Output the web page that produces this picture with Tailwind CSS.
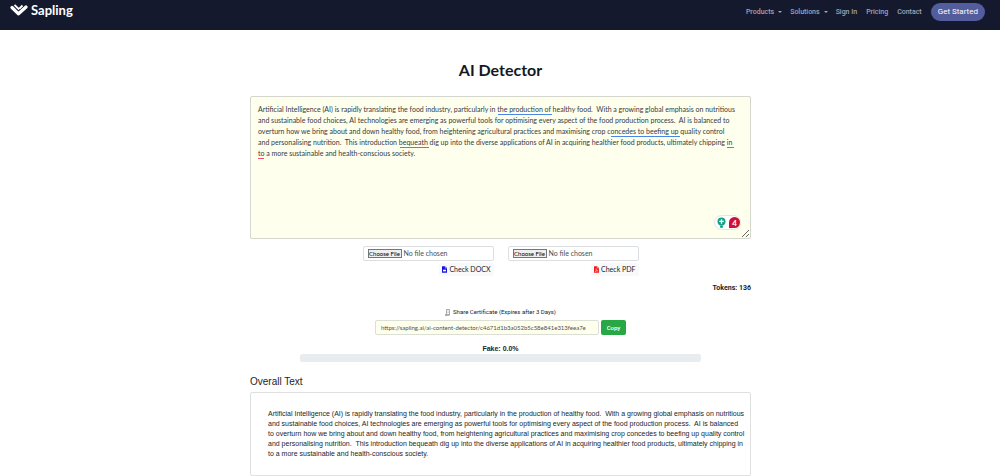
<!DOCTYPE html>
<html lang="en">
<head>
<meta charset="utf-8">
<meta name="viewport" content="width=device-width, initial-scale=1">
<title>AI Detector | Sapling</title>
<script src="https://cdn.jsdelivr.net/npm/@tailwindcss/browser@4"></script>
</head>
<body class="bg-white font-['Liberation_Sans',sans-serif] text-[#212529]">
<header class="flex h-[30px] items-start justify-between bg-[#15192e] pr-[15px] pl-[10px]">
  <a href="#" class="flex items-center gap-[3px] pt-[2px] font-['Lato',sans-serif] text-[13px] leading-4 font-bold text-white">
    <svg class="h-[12px] w-[18px]" viewBox="0 0 18 12" fill="none" aria-hidden="true"><path d="M2 3.500l6.500 6.300L16 3" stroke="#fff" stroke-width="3.200" stroke-linejoin="round" stroke-linecap="round"/><path d="M4.500 .8l4.700 4.700M12.500 1.500L9.500 4.500" stroke="#fff" stroke-width="1.800"/></svg>
    Sapling
  </a>
  <nav class="flex items-center pt-[3px] font-['Roboto',sans-serif] text-[7px] leading-[18px] font-medium text-[#a3a5b2]">
    <button type="button" class="mr-[8px] flex items-center gap-[4px]">Products <span class="border-x-2 border-t-2 border-x-transparent border-t-current"></span></button>
    <button type="button" class="mr-[8px] flex items-center gap-[4px]">Solutions <span class="border-x-2 border-t-2 border-x-transparent border-t-current"></span></button>
    <a href="#" class="mr-[9px]">Sign In</a>
    <a href="#" class="mr-[9px]">Pricing</a>
    <a href="#" class="mr-[9px]">Contact</a>
    <a href="#" class="rounded-full bg-[#535c9c] px-[7px] text-[8px] font-normal text-white">Get Started</a>
  </nav>
</header>
<main class="mx-auto w-[502px] max-w-full pl-px">
  <h1 class="pt-[28px] text-center font-['Lato',sans-serif] text-[16px] leading-6 font-bold text-[#15191e]">AI Detector</h1>
  <div class="relative mt-[14px] font-['Lato',sans-serif]">
    <textarea aria-label="Text to check" spellcheck="false" class="block h-[143px] w-full resize overflow-hidden rounded-[2px] border border-[#d5d7cf] bg-[#ffffee] px-[7px] py-[7px] text-[7px] leading-[11px] whitespace-pre text-[#343a40]">Artificial Intelligence (AI) is rapidly translating the food industry, particularly in the production of healthy food.  With a growing global emphasis on nutritious
and sustainable food choices, AI technologies are emerging as powerful tools for optimising every aspect of the food production process.  AI is balanced to
overturn how we bring about and down healthy food, from heightening agricultural practices and maximising crop concedes to beefing up quality control
and personalising nutrition.  This introduction bequeath dig up into the diverse applications of AI in acquiring healthier food products, ultimately chipping in
to a more sustainable and health-conscious society.</textarea>
    <div class="pointer-events-none" aria-hidden="true">
      <span class="absolute top-[18px] left-[248px] h-px w-[54px] bg-[#4a86e8]"></span>
      <span class="absolute top-[40px] left-[361px] h-px w-[69px] bg-[#4a86e8]"></span>
      <span class="absolute top-[51px] left-[150px] h-px w-[29px] bg-[#ef4b70]"></span>
      <span class="absolute top-[51px] left-[477px] h-px w-[7px] bg-[#ef4b70]"></span>
      <span class="absolute top-[62px] left-[8px] h-px w-[6px] bg-[#ef4b70]"></span>
    </div>
    <div class="absolute right-[10px] bottom-[9px] flex h-[15px] items-center gap-[3px] rounded-full border border-[#e3e5e8] bg-white pl-[2px]">
      <svg class="h-[11px] w-[9px]" viewBox="0 0 9 11" aria-hidden="true"><circle cx="4.5" cy="4.5" r="4" fill="#12a385"/><path d="M2.7 8.5h3.6L5.5 11h-2z" fill="#12a385"/><path d="M4.5 2.2v4.5M2.3 4.4h4.4" stroke="#fff" stroke-width="1.3"/></svg>
      <span class="flex h-[11px] w-[11px] items-center justify-center rounded-full rounded-bl-none bg-[#cf0f35] text-[8px] leading-none font-bold text-white">4</span>
    </div>
  </div>
  <div class="mt-[7px] flex justify-center gap-[14px] font-['Lato',sans-serif] text-[7px]">
    <div class="flex w-[131px] flex-col items-end gap-[2px]">
      <input type="file" aria-label="DOCX file" class="h-[15px] w-full rounded-[2px] border border-[#dcdfe2] px-[4px] py-[2px] text-[7px] leading-[9px] text-[#495057] file:mr-[2px] file:h-[9px] file:w-[34px] file:border file:border-solid file:border-[#767676] file:bg-[#efefef] file:p-0 file:text-[6px] file:leading-[7px] file:text-black">
      <button type="button" class="flex h-[13px] items-center gap-[2px] rounded-[2px] bg-[#f8f9fa] px-[3px]">
        <svg class="h-[7px] w-[5px]" viewBox="0 0 12 16" aria-hidden="true"><path d="M1 0h6v5h5v10q0 1-1 1H1q-1 0-1-1V1q0-1 1-1z M8 0l4 4H8z" fill="#1512e0"/><path d="M2.500 8.500h7v4h-7z" fill="#fff"/></svg>
        Check DOCX
      </button>
    </div>
    <div class="flex w-[131px] flex-col items-end gap-[2px]">
      <input type="file" aria-label="PDF file" class="h-[15px] w-full rounded-[2px] border border-[#dcdfe2] px-[4px] py-[2px] text-[7px] leading-[9px] text-[#495057] file:mr-[2px] file:h-[9px] file:w-[34px] file:border file:border-solid file:border-[#767676] file:bg-[#efefef] file:p-0 file:text-[6px] file:leading-[7px] file:text-black">
      <button type="button" class="flex h-[13px] items-center gap-[2px] rounded-[2px] bg-[#f8f9fa] px-[3px]">
        <svg class="h-[7px] w-[5px]" viewBox="0 0 12 16" aria-hidden="true"><path d="M1 0h6v5h5v10q0 1-1 1H1q-1 0-1-1V1q0-1 1-1z M8 0l4 4H8z" fill="#f01818"/><path d="M2.500 13.500C6 10 6 7 5 6c-1 3 2 5 5 5.500-3-.5-5 0-7.500 2z" fill="none" stroke="#fff"/></svg>
        Check PDF
      </button>
    </div>
  </div>
  <p class="mt-[7px] text-right font-['Roboto',sans-serif] text-[7px] leading-[10px] font-bold">Tokens: 136</p>
  <label for="share" class="mt-[14px] flex items-center justify-center gap-[3px] font-['Roboto',sans-serif] text-[6px] leading-[10px]">
    <svg class="h-[7px] w-[5px]" viewBox="0 0 5 7" fill="none" stroke="#777" stroke-width=".6" aria-hidden="true"><path d="M1.500 .5h3v5M1.500 .5v5M2.500 2h1M2.500 3.500h1M.3 5.500v1h3.500q.7 0 .7-1H.3"/></svg>
    Share Certificate (Expires after 3 Days)
  </label>
  <div class="mt-[3px] flex justify-center gap-[2px]">
    <input id="share" type="text" readonly value="https://sapling.ai/ai-content-detector/c4671d1b3a052b5c58e841e313feea7e" class="h-[15px] w-[224px] rounded-[2px] border border-[#dcdfd6] bg-[#ffffee] px-[5px] font-['Lato',sans-serif] text-[6px] text-[#495057]">
    <button type="button" class="h-[15px] w-[25px] rounded-[2px] bg-[#28a745] font-['Roboto',sans-serif] text-[6px] leading-[15px] font-medium text-white">Copy</button>
  </div>
  <p class="mt-[9px] text-center text-[7px] leading-[10px] font-bold">Fake: 0.0%</p>
  <div role="progressbar" aria-label="Fake" aria-valuenow="0" aria-valuemin="0" aria-valuemax="100" class="mx-auto h-[8px] w-4/5 rounded-[2px] bg-[#e9ecef]"></div>
  <h2 class="mt-[14px] text-[10px] leading-3">Overall Text</h2>
  <section class="mt-[4px] rounded-[2px] border border-[#dfdfdf] px-[17px] pt-[16px] pb-[16px] text-[7px] leading-[10px] whitespace-pre">Artificial Intelligence (AI) is rapidly translating the food industry, particularly in the production of healthy food.  With a growing global emphasis on nutritious
and sustainable food choices, AI technologies are emerging as powerful tools for optimising every aspect of the food production process.  AI is balanced
to overturn how we bring about and down healthy food, from heightening agricultural practices and maximising crop concedes to beefing up quality control
and personalising nutrition.  This introduction bequeath dig up into the diverse applications of AI in acquiring healthier food products, ultimately chipping in
to a more sustainable and health-conscious society.</section>
</main>
</body>
</html>
